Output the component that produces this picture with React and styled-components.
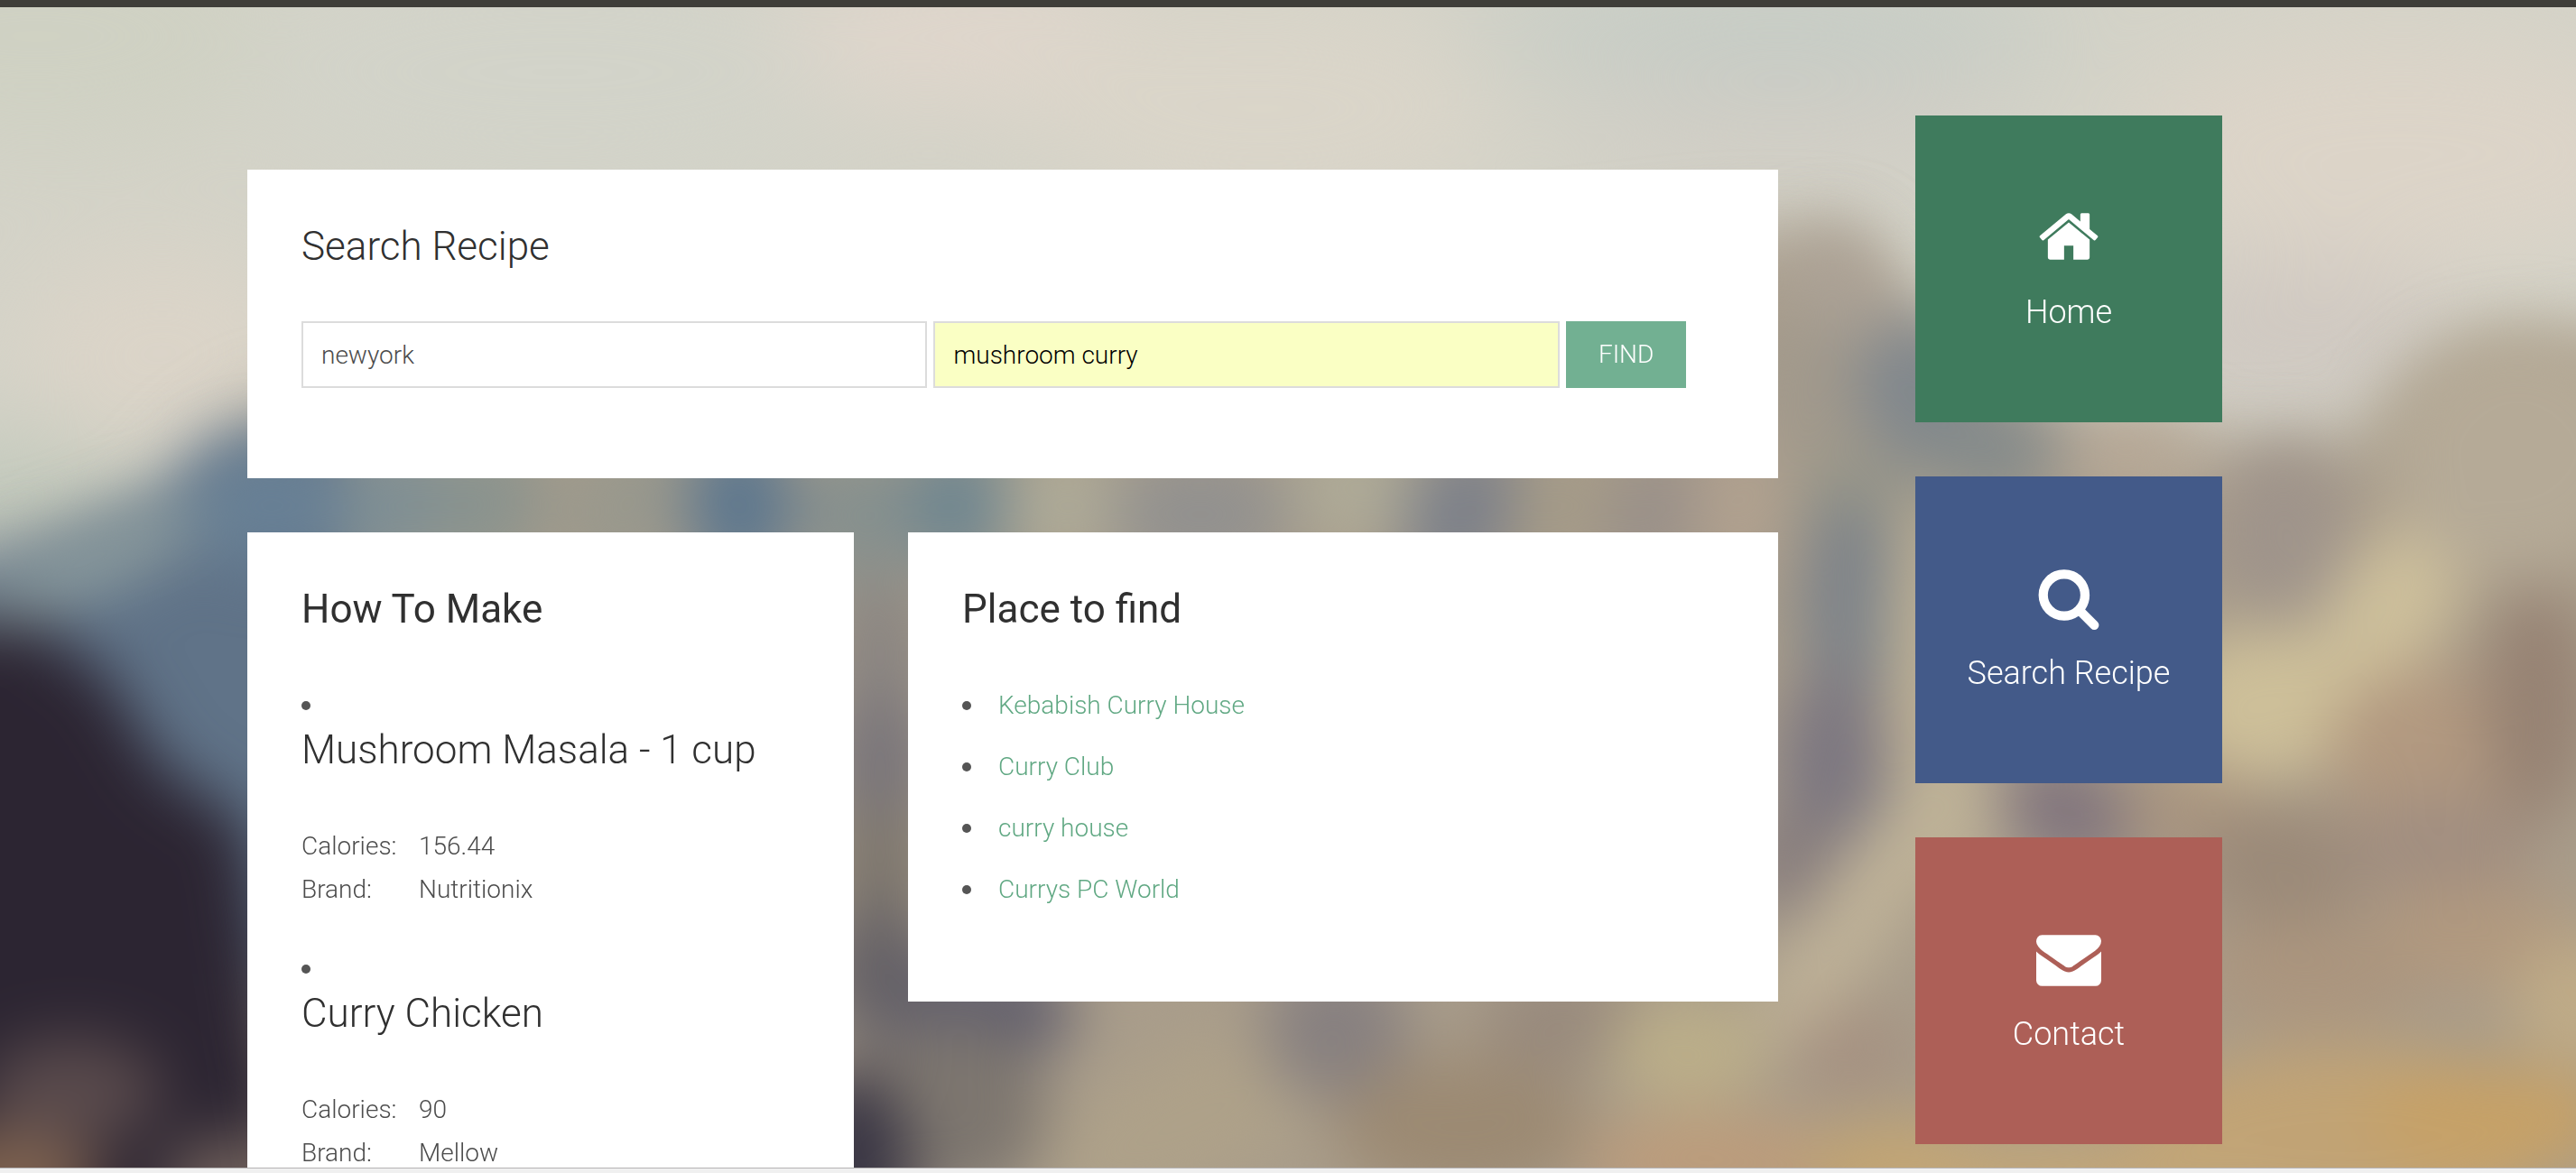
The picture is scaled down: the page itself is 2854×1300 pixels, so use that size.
import React from "react";
import styled, { createGlobalStyle } from "styled-components";

const GlobalStyle = createGlobalStyle`
  * { box-sizing: border-box; }
  body {
    margin: 0;
    background: #d4d4c8;
    color: #4c4c4c;
    font-family: Roboto, "Liberation Sans", sans-serif;
    font-size: 28px;
    font-weight: 300;
    line-height: 48px;
  }
`;

const Page = styled.div`
  position: relative;
  isolation: isolate;
  display: flex;
  flex-direction: column;
  height: 100vh;
  overflow: hidden;
`;

const Backdrop = styled.svg`
  position: absolute;
  inset: 0;
  z-index: -1;
  width: 100%;
  height: 100%;
`;

const TopBar = styled.header`
  flex: none;
  height: 8px;
  background: #3f3e39;
`;

const BottomBar = styled.footer`
  flex: none;
  height: 6px;
  border-top: 1px solid #b5b3b4;
  background: #f0f0f0;
`;

const Container = styled.div`
  display: flex;
  flex: 1;
  align-items: flex-start;
  gap: 152px;
  min-height: 0;
  padding: 120px 392px 0 274px;
  overflow: hidden;
`;

const Main = styled.main`
  display: flex;
  flex: 1;
  flex-direction: column;
  gap: 60px;
  min-width: 0;
  padding-top: 60px;
`;

const Columns = styled.div`
  display: grid;
  grid-template-columns: 672fr 964fr;
  align-items: start;
  gap: 60px;
`;

const Card = styled.section`
  padding: 60px 60px 100px;
  background: #fff;
`;

const Title = styled.h2`
  margin: 0 0 58px;
  color: #303030;
  font-size: 44px;
  font-weight: ${(p) => (p.$strong ? 400 : 300)};
  line-height: 50px;
`;

const SearchForm = styled.form`
  display: flex;
  gap: 7px;
`;

const Field = styled.input`
  width: 44%;
  height: 74px;
  padding: 0 20px;
  border: 2px solid #dcdcdc;
  border-radius: 0;
  outline: none;
  background: ${(p) => (p.$filled ? "#faffc4" : "#fff")};
  color: ${(p) => (p.$filled ? "#000" : "#4c4c4c")};
  font: inherit;
`;

const FindButton = styled.button`
  height: 74px;
  padding: 0 36px;
  border: 0;
  background: #72b092;
  color: #fff;
  font: inherit;
`;

const RecipeList = styled.ul`
  display: flex;
  flex-direction: column;
  gap: 40px;
  margin: 0;
  padding: 0;
  list-style: none;
`;

const Dot = styled.span`
  flex: none;
  width: 10px;
  height: 10px;
  border-radius: 50%;
  background: #555;
`;

const DotLine = styled.div`
  display: flex;
  align-items: center;
  height: 48px;
`;

const Facts = styled.table`
  border-collapse: collapse;

  th, td {
    padding: 0;
    font-weight: 300;
    text-align: left;
  }

  th { width: 130px; }
`;

const PlaceList = styled.ul`
  display: flex;
  flex-direction: column;
  gap: 20px;
  margin: 0;
  padding: 0;
  list-style: none;
`;

const Place = styled.li`
  display: flex;
  align-items: center;
  gap: 30px;
`;

const PlaceLink = styled.a`
  color: #60a883;
  text-decoration: none;
`;

const Nav = styled.nav`
  display: flex;
  flex: none;
  flex-direction: column;
  gap: 60px;
  width: 340px;
`;

const Tile = styled.a`
  display: flex;
  flex-direction: column;
  align-items: center;
  justify-content: center;
  gap: 24px;
  aspect-ratio: 1;
  background: ${(p) => p.$color};
  color: #fff;
  font-size: 36px;
  text-decoration: none;
`;

const TileIcon = styled.svg`
  width: 72px;
  height: 72px;
  fill: currentColor;
`;

const recipes = [
  { name: "Mushroom Masala - 1 cup", calories: "156.44", brand: "Nutritionix" },
  { name: "Curry Chicken", calories: "90", brand: "Mellow" },
];

const places = ["Kebabish Curry House", "Curry Club", "curry house", "Currys PC World"];

const tiles = [
  {
    label: "Home",
    color: "#3f7b5d",
    path: "M1472 992v480q0 26-19 45t-45 19h-384v-384h-256v384h-384q-26 0-45-19t-19-45v-480q0-1 .5-3t.5-3l575-474 575 474q1 2 1 6zm223-69l-62 74q-8 9-21 11h-3q-13 0-21-7l-692-577-692 577q-12 8-24 7-13-2-21-11l-62-74q-8-10-7-23.5t11-21.5l719-599q32-26 76-26t76 26l244 204v-195q0-14 9-23t23-9h192q14 0 23 9t9 23v408l219 182q10 8 11 21.5t-7 23.5z",
  },
  {
    label: "Search Recipe",
    color: "#435a89",
    path: "M1216 832q0-185-131.5-316.5t-316.5-131.5-316.5 131.5-131.5 316.5 131.5 316.5 316.5 131.5 316.5-131.5 131.5-316.5zm512 832q0 52-38 90t-90 38q-54 0-90-38l-343-342q-179 124-399 124-143 0-273.5-55.5t-225-150-150-225-55.5-273.5 55.5-273.5 150-225 225-150 273.5-55.5 273.5 55.5 225 150 150 225 55.5 273.5q0 220-124 399l343 343q37 37 37 90z",
  },
  {
    label: "Contact",
    color: "#ad5f57",
    path: "M1792 710v794q0 66-47 113t-113 47h-1472q-66 0-113-47t-47-113v-794q44 49 101 87 362 246 497 345 57 42 92.5 65.5t94.5 48 110 24.5h2q51 0 110-24.5t94.5-48 92.5-65.5q170-123 498-345 57-39 100-87zm0-294q0 79-49 151t-122 123q-376 261-468 325-10 7-42.5 31t-54 38.5-52 32.5-57.5 27-50 9h-2q-23 0-50-9t-57.5-27-52-32.5-54-38.5-42.5-31q-91-64-262-182.5t-205-142.5q-62-42-117-115.5t-55-136.5q0-78 41.5-130t118.5-52h1472q65 0 112.5 47t47.5 113z",
  },
];

// Soft patches of the landscape: centre x, centre y, radius x, radius y, colour, tilt.
const skyPatches = [
  [40, 40, 260, 120, "#cfd1c3"],
  [620, 80, 340, 130, "#d2d3c9"],
  [1080, 40, 220, 70, "#e0d6cc"],
  [1400, 120, 260, 120, "#dad5c9"],
  [180, 390, 160, 110, "#dbd4c8"],
  [0, 560, 160, 70, "#c0c8bb"],
  [1960, 30, 340, 50, "#c3cbc5"],
  [1980, 140, 260, 60, "#d0cdc5"],
  [2660, 170, 300, 130, "#dcd4c8"],
  [2540, 370, 180, 80, "#cfc8c1"],
];

const landPatches = [
  [100, 620, 150, 40, "#84959a", -25],
  [300, 560, 90, 70, "#688095"],
  [440, 560, 60, 80, "#7f8f94", 15],
  [540, 560, 60, 80, "#8a938e", 15],
  [690, 560, 60, 90, "#98988d", 15],
  [820, 560, 60, 90, "#5d778e"],
  [950, 570, 60, 80, "#86908e"],
  [1060, 560, 55, 80, "#6f8690"],
  [1180, 560, 65, 70, "#aeaa97", 20],
  [1330, 570, 100, 70, "#92918f"],
  [1500, 540, 70, 70, "#aeaa97"],
  [1620, 570, 60, 90, "#7c8089", 20],
  [1730, 560, 55, 80, "#a59b88", 15],
  [1830, 570, 45, 80, "#988f89", 15],
  [1930, 560, 50, 80, "#b1a18f"],
  [975, 720, 60, 80, "#8b8682"],
  [975, 850, 60, 90, "#79757a"],
  [975, 960, 60, 70, "#7e776e"],
  [975, 1080, 70, 80, "#666266"],
  [1090, 1120, 100, 60, "#605e6d"],
  [1060, 1230, 100, 100, "#7d766f"],
  [940, 1310, 70, 130, "#3a3644"],
  [1320, 1240, 180, 75, "#aea189", -25],
  [1480, 1140, 80, 80, "#878080", 15],
  [1620, 1250, 140, 80, "#9c8a73"],
  [1730, 1130, 90, 60, "#988a7d"],
  [1870, 1165, 90, 60, "#bbae89"],
  [1900, 1290, 150, 55, "#bc9c7b"],
  [2050, 1165, 70, 50, "#a59181"],
  [2110, 1300, 110, 60, "#c2a471"],
  [2030, 320, 60, 70, "#aca296"],
  [2000, 430, 60, 90, "#a1998c"],
  [2130, 440, 70, 90, "#80878d", -20],
  [2210, 500, 90, 55, "#858b8b"],
  [2050, 560, 60, 60, "#989789"],
  [2050, 670, 55, 120, "#7c8289"],
  [2030, 850, 60, 110, "#7b7680"],
  [2130, 740, 40, 190, "#bfb296"],
  [1990, 960, 60, 60, "#857b7c"],
  [2070, 990, 48, 200, "#bfb298", 34],
  [2360, 500, 90, 40, "#b5a694"],
  [2160, 900, 60, 80, "#beb297", 15],
  [2290, 900, 80, 55, "#80747d", 25],
  [2430, 900, 80, 60, "#a99580"],
  [2530, 590, 80, 100, "#9f948b"],
  [2650, 670, 65, 110, "#cdbf9b", 35],
  [2510, 780, 110, 85, "#cdbf99"],
  [2790, 500, 150, 140, "#b5aa97"],
  [2690, 830, 110, 90, "#b29980"],
  [2810, 780, 60, 130, "#968273"],
  [2530, 960, 100, 70, "#9b8a79"],
  [2700, 940, 110, 60, "#a18e80"],
  [2740, 1040, 120, 60, "#b1997f"],
  [2560, 1080, 130, 60, "#ab957e"],
  [2860, 1110, 80, 70, "#bfab87"],
  [2600, 1260, 240, 100, "#c1a375"],
  [2760, 1240, 140, 60, "#c6a167"],
  [2300, 1310, 240, 50, "#c2a678"],
];

const Patches = ({ items }) =>
  items.map(([x, y, rx, ry, fill, tilt = 0]) => (
    <ellipse key={`${x}-${y}`} cx={x} cy={y} rx={rx} ry={ry} fill={fill} transform={`rotate(${tilt} ${x} ${y})`} />
  ));

const Blur = ({ id, amount }) => (
  <filter
    id={id}
    filterUnits="userSpaceOnUse"
    x="-300"
    y="-300"
    width="3454"
    height="1900"
    colorInterpolationFilters="sRGB"
  >
    <feGaussianBlur stdDeviation={amount} />
  </filter>
);

const Landscape = () => (
  <Backdrop viewBox="0 0 2854 1300" preserveAspectRatio="xMidYMid slice" aria-hidden="true">
    <defs>
      <Blur id="haze" amount={55} />
      <Blur id="edge" amount={40} />
      <Blur id="soft" amount={34} />
    </defs>
    <rect width="2854" height="1300" fill="#d4d3c8" />
    <g filter="url(#haze)">
      <Patches items={skyPatches} />
    </g>
    <g filter="url(#edge)">
      <path
        d="M-200 640L60 600 170 560 220 500 300 450 1900 260 2040 260 2110 330 2300 480 2480 500 2600 490 2720 400 3100 350V1500H-200z"
        fill="#a99d8b"
      />
      <path d="M-200 640L80 610 180 560 240 490 400 480 400 1100-200 1100z" fill="#607388" />
    </g>
    <g filter="url(#soft)">
      <Patches items={landPatches} />
      <path d="M-200 690L40 690 120 750 180 850 270 910 360 1500H-200z" fill="#2c2532" />
      <ellipse cx="80" cy="1210" rx="100" ry="60" fill="#594a4c" />
      <ellipse cx="0" cy="1310" rx="110" ry="55" fill="#80634f" />
      <ellipse cx="260" cy="1320" rx="80" ry="60" fill="#70605b" />
    </g>
  </Backdrop>
);

export default function App() {
  return (
    <Page>
      <GlobalStyle />
      <Landscape />
      <TopBar />
      <Container>
        <Main>
          <Card>
            <Title>Search Recipe</Title>
            <SearchForm onSubmit={(e) => e.preventDefault()}>
              <Field type="text" aria-label="Location" defaultValue="newyork" />
              <Field type="text" aria-label="Dish" defaultValue="mushroom curry" $filled />
              <FindButton type="submit">FIND</FindButton>
            </SearchForm>
          </Card>
          <Columns>
            <Card>
              <Title $strong>How To Make</Title>
              <RecipeList>
                {recipes.map((recipe) => (
                  <li key={recipe.name}>
                    <DotLine>
                      <Dot />
                    </DotLine>
                    <Title as="h3">{recipe.name}</Title>
                    <Facts>
                      <tbody>
                        <tr>
                          <th scope="row">Calories:</th>
                          <td>{recipe.calories}</td>
                        </tr>
                        <tr>
                          <th scope="row">Brand:</th>
                          <td>{recipe.brand}</td>
                        </tr>
                      </tbody>
                    </Facts>
                  </li>
                ))}
              </RecipeList>
            </Card>
            <Card>
              <Title $strong>Place to find</Title>
              <PlaceList>
                {places.map((place) => (
                  <Place key={place}>
                    <Dot />
                    <PlaceLink href="#place">{place}</PlaceLink>
                  </Place>
                ))}
              </PlaceList>
            </Card>
          </Columns>
        </Main>
        <Nav aria-label="Sections">
          {tiles.map((tile) => (
            <Tile key={tile.label} href="#section" $color={tile.color}>
              <TileIcon viewBox="0 0 1792 1792" aria-hidden="true">
                <path d={tile.path} />
              </TileIcon>
              {tile.label}
            </Tile>
          ))}
        </Nav>
      </Container>
      <BottomBar />
    </Page>
  );
}
